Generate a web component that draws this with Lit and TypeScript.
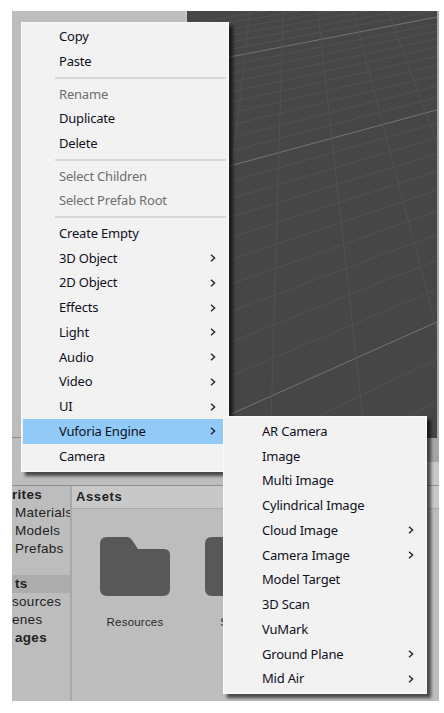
import { LitElement, html, css, svg } from 'lit';
import { customElement } from 'lit/decorators.js';

type Item = { label?: string; sub?: boolean; off?: boolean; on?: boolean };

const SEP: Item = {};

const MAIN: Item[] = [
  { label: 'Copy' },
  { label: 'Paste' },
  SEP,
  { label: 'Rename', off: true },
  { label: 'Duplicate' },
  { label: 'Delete' },
  SEP,
  { label: 'Select Children', off: true },
  { label: 'Select Prefab Root', off: true },
  SEP,
  { label: 'Create Empty' },
  { label: '3D Object', sub: true },
  { label: '2D Object', sub: true },
  { label: 'Effects', sub: true },
  { label: 'Light', sub: true },
  { label: 'Audio', sub: true },
  { label: 'Video', sub: true },
  { label: 'UI', sub: true },
  { label: 'Vuforia Engine', sub: true, on: true },
  { label: 'Camera' },
];

const VUFORIA: Item[] = [
  { label: 'AR Camera' },
  { label: 'Image' },
  { label: 'Multi Image' },
  { label: 'Cylindrical Image' },
  { label: 'Cloud Image', sub: true },
  { label: 'Camera Image', sub: true },
  { label: 'Model Target' },
  { label: '3D Scan' },
  { label: 'VuMark' },
  { label: 'Ground Plane', sub: true },
  { label: 'Mid Air', sub: true },
];

// perspective grid: k counts lines going down, every 10th one is a major line
function gridLines() {
  const out = [];
  for (let k = -6; k <= 27; k++) {
    const d = 1 - 0.0281 * k;
    const y1 = (57 + 6.23 * k) / d;
    const y2 = (17 + 6.2 * k) / d;
    const major = k % 10 === 0;
    const slope = (y2 - y1) / 208;
    out.push(svg`<line x1="187" y1=${y1 - slope * 43} x2="437" y2=${y2}
      stroke=${major ? '#747474' : '#525252'} stroke-width="1"></line>`);
  }
  return out;
}

const FAN = [
  [250, 11, 232, 170],
  [283, 11, 271, 420],
  [318, 11, 363, 420],
  [353, 11, 437, 330],
  [388, 11, 437, 143],
];

@customElement('app-root')
export class AppRoot extends LitElement {
  static styles = css`
    :host {
      display: block;
      position: relative;
      width: 444px;
      height: 713px;
      background: #fff;
      overflow: hidden;
      font-family: 'Liberation Sans', Arial, sans-serif;
    }

    .frame {
      display: flex;
      flex-direction: column;
      margin: 11px 5px 0 12px;
      height: 690px;
      background: #bdbdbd;
    }

    .top {
      display: flex;
      height: 427px;
      padding-right: 2px;
      background: #a8a8a8;
    }
    .hierarchy {
      width: 173px;
      background: #bdbdbd;
      border-right: 2px solid #c6c6c6;
      border-bottom: 1px solid #8c8c8c;
    }
    .scene {
      flex: 1;
      background: #464646;
      display: block;
    }
    .scene svg {
      display: block;
    }

    .band {
      display: flex;
      height: 24px;
    }
    .band .left {
      width: 175px;
      background: #bdbdbd;
    }
    .band .right {
      flex: 1;
      background: #a6a6a6;
    }
    .toolbar {
      display: flex;
      height: 23px;
      border-bottom: 1px solid #8f8f8f;
    }
    .toolbar .left {
      width: 211px;
      background: #bdbdbd;
    }
    .toolbar .right {
      flex: 1;
      background: #c8c8c8;
    }

    .project {
      flex: 1;
      display: flex;
      min-height: 0;
    }
    .tree {
      width: 58px;
      border-right: 2px solid #a9a9a9;
      overflow: hidden;
      font-size: 13.5px;
      color: #222;
      letter-spacing: 0.3px;
    }
    .tree div {
      height: 18px;
      line-height: 18px;
      white-space: nowrap;
    }
    .tree .head {
      font-weight: 700;
    }
    .tree .in {
      padding-left: 3px;
    }
    .tree .gap {
      height: 17px;
    }
    .tree .sel {
      background: #adadad;
      font-weight: 700;
      padding-left: 3px;
    }
    .tree .bold {
      font-weight: 700;
      padding-left: 3px;
    }

    .assets {
      flex: 1;
      min-width: 0;
      display: flex;
      flex-direction: column;
    }
    .assets-head {
      height: 22px;
      line-height: 21px;
      padding-left: 4px;
      background: #c8c8c8;
      border-bottom: 1px solid #a8a8a8;
      font-size: 13px;
      font-weight: 700;
      letter-spacing: 0.6px;
      color: #222;
    }
    .tiles {
      display: flex;
      gap: 35px;
      padding: 28px 0 0 28px;
      overflow: hidden;
    }
    .tile {
      width: 70px;
      flex: none;
      display: flex;
      flex-direction: column;
      align-items: center;
      gap: 20px;
      font-size: 11.5px;
      color: #2a2a2a;
      letter-spacing: 0.2px;
    }
    .tile svg {
      display: block;
    }

    .menu {
      position: absolute;
      box-sizing: border-box;
      background: #f2f2f2;
      border: 1px solid #fafafa;
      padding: 2px 0;
      box-shadow: 4px 4px 3px rgba(0, 0, 0, 0.62);
      font-family: 'Noto Sans', 'Open Sans', sans-serif;
      font-size: 13px;
      letter-spacing: -0.2px;
      color: #10101c;
    }
    .main {
      left: 21px;
      top: 21.6px;
      width: 208px;
    }
    .vuforia {
      left: 223px;
      top: 416.1px;
      width: 204px;
    }
    .vuforia .row {
      padding-left: 37px;
    }
    .row {
      display: flex;
      align-items: center;
      justify-content: space-between;
      height: 24.75px;
      margin-left: 1px;
      padding: 0 12px 0 36px;
      white-space: nowrap;
    }
    .row span {
      padding-bottom: 1px;
    }
    .row.off {
      color: #6e6e6e;
    }
    .row.on {
      background: #91c9f7;
    }
    .row svg {
      display: block;
    }
    .sep {
      height: 7.75px;
      display: flex;
      align-items: center;
      margin: 0 2px 0 33px;
    }
    .sep::after {
      content: '';
      flex: 1;
      height: 1.5px;
      background: #d7d7d7;
    }
  `;

  private chevron() {
    return html`<svg width="6" height="8" viewBox="0 0 6 8">
      <path d="M1 .8 4.6 4 1 7.2" fill="none" stroke="#26262c" stroke-width="1.4"></path>
    </svg>`;
  }

  private menu(items: Item[], cls: string) {
    return html`<div class="menu ${cls}">
      ${items.map((it) =>
        it === SEP
          ? html`<div class="sep"></div>`
          : html`<div class="row ${it.off ? 'off' : ''} ${it.on ? 'on' : ''}">
              <span>${it.label}</span>${it.sub ? this.chevron() : ''}
            </div>`,
      )}
    </div>`;
  }

  private folder() {
    return html`<svg width="70" height="59" viewBox="0 0 70 59">
      <path
        d="M7 0H27Q30 0 32 3L38 12H64Q70 12 70 18V52Q70 59 63 59H7Q0 59 0 52V7Q0 0 7 0Z"
        fill="#585858"
      ></path>
    </svg>`;
  }

  render() {
    return html`
      <div class="frame">
        <div class="top">
          <div class="hierarchy"></div>
          <div class="scene">
            <svg width="250" height="427" viewBox="187 11 250 427">
              ${gridLines()}
              ${FAN.map(
                ([x1, y1, x2, y2]) =>
                  svg`<line x1=${x1} y1=${y1} x2=${x2} y2=${y2} stroke="#525252"></line>`,
              )}
            </svg>
          </div>
        </div>
        <div class="band"><div class="left"></div><div class="right"></div></div>
        <div class="toolbar"><div class="left"></div><div class="right"></div></div>
        <div class="project">
          <div class="tree">
            <div class="head">rites</div>
            <div class="in">Materials</div>
            <div class="in">Models</div>
            <div class="in">Prefabs</div>
            <div class="gap"></div>
            <div class="sel">ts</div>
            <div>sources</div>
            <div>enes</div>
            <div class="bold">ages</div>
          </div>
          <div class="assets">
            <div class="assets-head">Assets</div>
            <div class="tiles">
              <div class="tile">${this.folder()}<span>Resources</span></div>
              <div class="tile">${this.folder()}<span>Scenes</span></div>
            </div>
          </div>
        </div>
      </div>
      ${this.menu(MAIN, 'main')} ${this.menu(VUFORIA, 'vuforia')}
    `;
  }
}
